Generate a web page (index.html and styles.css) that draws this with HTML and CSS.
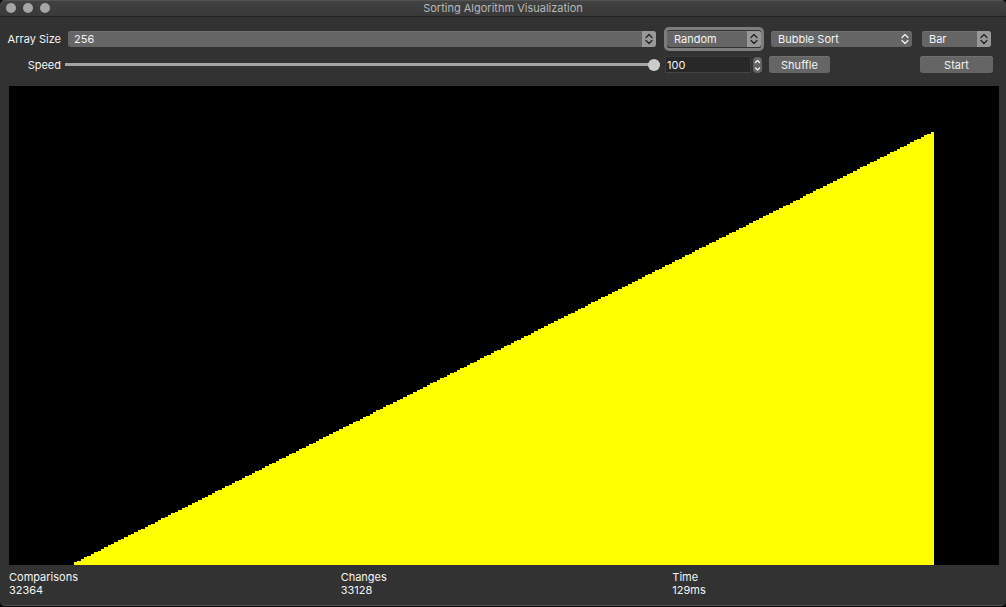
FILE: index.html
```html
<!DOCTYPE html>
<html lang="en">
<head>
<meta charset="utf-8">
<title>Sorting Algorithm Visualization</title>
<link rel="stylesheet" href="styles.css">
</head>
<body>
<div class="window">
  <header class="titlebar">
    <div class="lights"><span class="light"></span><span class="light"></span><span class="light"></span></div>
    <h1 class="title">Sorting Algorithm Visualization</h1>
  </header>
  <main class="content">
    <form class="controls">
      <label class="label" for="size">Array Size</label>
      <div class="popup">
        <select id="size"><option>256</option></select>
        <span class="cap"><svg viewBox="0 0 12 16"><path d="M3 6.5 6 3.5 9 6.5M3 9.5 6 12.5 9 9.5"/></svg></span>
      </div>
      <div class="side">
        <div class="popup focused order">
          <select aria-label="Initial order"><option>Random</option></select>
          <span class="cap"><svg viewBox="0 0 12 16"><path d="M3 6.5 6 3.5 9 6.5M3 9.5 6 12.5 9 9.5"/></svg></span>
        </div>
        <div class="popup plain algorithm">
          <select aria-label="Algorithm"><option>Bubble Sort</option></select>
          <span class="cap"><svg viewBox="0 0 12 16"><path d="M3 6.5 6 3.5 9 6.5M3 9.5 6 12.5 9 9.5"/></svg></span>
        </div>
        <div class="popup style">
          <select aria-label="Style"><option>Bar</option></select>
          <span class="cap"><svg viewBox="0 0 12 16"><path d="M3 6.5 6 3.5 9 6.5M3 9.5 6 12.5 9 9.5"/></svg></span>
        </div>
      </div>
      <label class="label" for="speed">Speed</label>
      <input class="slider" id="speed" type="range" min="0" max="100" value="100">
      <div class="side">
        <input class="number" type="number" aria-label="Speed value" value="100">
        <div class="stepper">
          <button type="button" aria-label="Increase"><svg viewBox="0 0 9 8"><path d="M2.5 5.5 4.5 3.5 6.5 5.5"/></svg></button>
          <button type="button" aria-label="Decrease"><svg viewBox="0 0 9 8"><path d="M2.5 3 4.5 5 6.5 3"/></svg></button>
        </div>
        <button class="push shuffle" type="button">Shuffle</button>
        <button class="push start" type="button">Start</button>
      </div>
    </form>
    <svg class="canvas" viewBox="0 0 990 479" preserveAspectRatio="none" role="img" aria-label="Sorted bars"><path id="bars"/></svg>
    <dl class="stats">
      <div><dt>Comparisons</dt><dd>32364</dd></div>
      <div><dt>Changes</dt><dd>33128</dd></div>
      <div><dt>Time</dt><dd>129ms</dd></div>
    </dl>
  </main>
</div>
<script src="bars.js"></script>
</body>
</html>
```
FILE: styles.css
```css
* { box-sizing: border-box; }
body {
  margin: 0;
  background: #0c0809;
  color: #f4f4f4;
  font: 11px/14px Inter, "Liberation Sans", sans-serif;
}
.window {
  display: flex;
  flex-direction: column;
  height: calc(100vh - 1px);
  min-height: 300px;
  background: #323232;
  border-bottom: 1px solid #505050;
  border-radius: 5px;
  overflow: hidden;
}
.titlebar {
  display: grid;
  grid-template-columns: 1fr auto 1fr;
  align-items: center;
  height: 17px;
  padding: 0 6px 2px;
  background: linear-gradient(#424242, #393939);
  border-top: 1px solid #545454;
  border-bottom: 1px solid #202020;
}
.lights { display: flex; gap: 7px; }
.light { width: 10px; height: 10px; border-radius: 50%; background: #a5a5a5; }
.title { margin: 0; font-size: 11px; font-weight: 400; color: #b8b8b8; }
.content {
  flex: 1;
  min-height: 0;
  display: flex;
  flex-direction: column;
  padding: 13px 7px 8px 9px;
}
.controls {
  display: grid;
  grid-template-columns: 52px 1fr 328px;
  grid-template-rows: 17px 17px;
  row-gap: 9px;
  align-items: center;
  padding-right: 6px;
}
.label { justify-self: end; white-space: nowrap; }
.popup { position: relative; height: 16px; margin: 0 9px 0 7px; }
.side { display: flex; align-items: center; }
select, input, button { font: inherit; color: inherit; border: 0; margin: 0; padding: 0; outline: 0; }
select {
  appearance: none;
  display: block;
  width: 100%;
  height: 16px;
  padding: 0 18px 0 6px;
  border-radius: 3px;
  background: #656565;
  box-shadow: inset 0 1px #707070;
}
.side select { padding-left: 7px; }
.cap {
  position: absolute;
  top: 0;
  right: 0;
  width: 14px;
  height: 16px;
  display: grid;
  place-items: center;
  border-radius: 0 3px 3px 0;
  background: #989898;
  color: #222;
  pointer-events: none;
}
.cap svg { width: 12px; height: 16px; }
.plain .cap { background: none; color: #eee; }
svg path { fill: none; stroke: currentColor; stroke-width: 1.3; stroke-linecap: round; stroke-linejoin: round; }
.side .popup { margin: 0; }
.focused::before {
  content: "";
  position: absolute;
  inset: -4px -3px;
  border: 3px solid #7d7d7d;
  border-radius: 5px;
  pointer-events: none;
}
.side .order { width: 94px; margin-left: 2px; }
.side .algorithm { width: 141px; margin-left: 10px; }
.side .style { width: 69px; margin-left: 10px; }
.slider {
  appearance: none;
  height: 17px;
  margin: 0 5px 0 4px;
  background: linear-gradient(#a5a5a5, #a5a5a5) center / 100% 3px no-repeat;
}
.slider::-webkit-slider-thumb {
  appearance: none;
  width: 12px;
  height: 12px;
  border-radius: 50%;
  background: #cbcbcb;
}
.number {
  appearance: textfield;
  width: 86px;
  height: 17px;
  padding: 0 1px;
  background: #282828;
  border: 1px solid #3a3a3a;
  border-bottom-color: #454545;
}
.number::-webkit-inner-spin-button { appearance: none; }
.stepper {
  display: flex;
  flex-direction: column;
  width: 9px;
  height: 16px;
  margin-left: 2px;
  border-radius: 4px;
  background: #656565;
}
.stepper button { display: block; height: 8px; background: none; }
.stepper svg { display: block; width: 9px; height: 8px; }
.push { height: 17px; border-radius: 3px; background: #656565; box-shadow: inset 0 1px #707070; }
.shuffle { width: 61px; margin-left: 7px; }
.start { width: 73px; margin-left: auto; }
.canvas {
  flex: 1;
  min-height: 0;
  width: 100%;
  margin-top: 13px;
  background: #000;
}
.canvas path { fill: #ff0; stroke: none; shape-rendering: crispEdges; }
.stats {
  display: grid;
  grid-template-columns: repeat(3, 1fr);
  column-gap: 5px;
  margin: 6px 0 0;
  line-height: 13px;
}
.stats dd { margin: 0; }
```
FILE: bars.js
```javascript
const count = 256;
const view = { width: 990, height: 479 };
const left = 65;
const barWidth = (view.width - left * 2) / count;
const base = view.height - 1;
const unit = 432 / count;

let path = `M${left} ${view.height}`;
for (let i = 0; i < count; i++) {
  path += `V${base - (i + 1) * unit}H${left + (i + 1) * barWidth}`;
}
document.getElementById("bars").setAttribute("d", `${path}V${view.height}Z`);
```
